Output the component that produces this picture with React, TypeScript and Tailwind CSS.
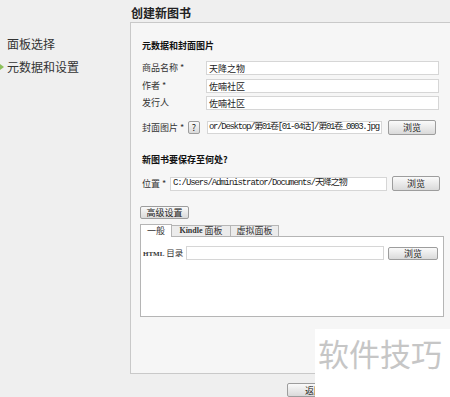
import React from 'react'

const cjk = "font-['Noto_Sans_CJK_SC',sans-serif]"
const mono = "font-['Liberation_Mono','Noto_Sans_CJK_SC',monospace]"

function Btn({ children, className = '' }: { children: React.ReactNode; className?: string }) {
  return (
    <div
      className={`flex items-center justify-center rounded-[2px] border border-[#9d9d9d] bg-linear-to-b from-[#fafafa] to-[#dadada] text-[9px] leading-none text-[#222] ${className}`}
    >
      {children}
    </div>
  )
}

function Field({ value = '', className = '', mono: isMono = false }: { value?: string; className?: string; mono?: boolean }) {
  return (
    <div
      className={`flex items-center overflow-hidden whitespace-nowrap border border-[#d6d6d6] bg-white px-[2px] text-[9px] leading-none text-[#222] ${isMono ? mono : ''} ${className}`}
    >
      {value}
    </div>
  )
}

export default function App() {
  return (
    <div className={`relative flex h-[397px] w-[450px] overflow-hidden bg-[#efefef] text-[#333] ${cjk}`}>
      {/* left nav */}
      <div className="w-[130px] shrink-0 pt-[36px] text-[12px]">
        <div className="pl-[7px] leading-[16px]">面板选择</div>
        <div className="mt-[7px] flex items-center leading-[16px]">
          <span className="h-0 w-0 border-y-[3px] border-l-[4px] border-y-transparent border-l-[#8cbf5a]" />
          <span className="pl-[3px]">元数据和设置</span>
        </div>
      </div>

      {/* main */}
      <div className="flex shrink-0 flex-col">
        <div className="pl-[1px] pt-[4px] text-[12px] font-bold leading-[18px] text-[#222]">创建新图书</div>

        <div className="flex h-[354px] w-[322px] flex-col border border-[#c9c9c9] bg-[#f6f6f6] pl-[9px] text-[9px]">
          <div className="mt-[16px] pl-[2px] font-bold leading-[14px] text-[#111]">元数据和封面图片</div>

          <div className="mt-[8px] flex h-[14px] items-center pl-[2px]">
            <span className="w-[64px]">商品名称 *</span>
            <Field value="天降之物" className="h-[14px] w-[233px]" />
          </div>
          <div className="mt-[4px] flex h-[14px] items-center pl-[2px]">
            <span className="w-[64px]">作者 *</span>
            <Field value="佐喃社区" className="h-[14px] w-[233px]" />
          </div>
          <div className="mt-[3px] flex h-[14px] items-center pl-[2px]">
            <span className="w-[64px]">发行人</span>
            <Field value="佐喃社区" className="h-[14px] w-[233px] border-[#a9c9d9] bg-[#fdfeff]" />
          </div>

          <div className="mt-[10px] flex h-[15px] items-center pl-[2px]">
            <span className="w-[46px]">封面图片 *</span>
            <Btn className="h-[13px] w-[12px] text-[8px]">?</Btn>
            <Field
              mono
              value="or/Desktop/第01卷[01-04话]/第01卷_0003.jpg"
              className="ml-[7px] h-[13px] w-[175px] !px-[1px] text-[8px] tracking-[-1.3px]"
            />
            <Btn className="ml-[6px] h-[15px] w-[48px]">浏览</Btn>
          </div>

          <div className="mt-[18px] pl-[2px] font-bold leading-[14px] text-[#111]">新图书要保存至何处?</div>

          <div className="mt-[9px] flex h-[15px] items-center pl-[2px]">
            <span className="w-[28px]">位置 *</span>
            <Field
              mono
              value="C:/Users/Administrator/Documents/天降之物"
              className="h-[14px] w-[217px] text-[8.5px] tracking-[-1.1px]"
            />
            <Btn className="ml-[5px] h-[15px] w-[48px]">浏览</Btn>
          </div>

          <Btn className="mt-[15px] h-[13px] w-[49px]">高级设置</Btn>

          <div className="mt-[5px] -mb-[1px] flex h-[13px] items-stretch text-[9px]">
            <div className="relative z-10 flex w-[32px] items-center justify-center border border-b-0 border-[#b5b5b5] bg-white">一般</div>
            <div className="mt-[1px] flex w-[59px] items-center justify-center border-y border-r border-[#b5b5b5] bg-[#ececec]">
              <span className="font-['Liberation_Serif',serif] text-[8px] font-bold">Kindle</span>&nbsp;面板
            </div>
            <div className="mt-[1px] flex w-[48px] items-center justify-center border-y border-r border-[#b5b5b5] bg-[#ececec]">虚拟面板</div>
          </div>
          <div className="h-[81px] w-[304px] border border-[#b5b5b5] bg-white pl-[2px] pt-[9px]">
            <div className="flex h-[14px] items-center">
              <span className="w-[43px] text-[8.5px]">
                <span className="font-['Liberation_Serif',serif] text-[7px] font-bold">HTML</span> 目录
              </span>
              <Field className="h-[14px] w-[198px]" />
              <Btn className="ml-[4px] h-[13px] w-[50px]">浏览</Btn>
            </div>
          </div>
        </div>

        <Btn className="ml-[157px] mt-[9px] h-[14px] w-[54px]">返回</Btn>
      </div>

      {/* watermark overlay */}
      <div className="absolute left-[315px] top-[329px] h-[68px] w-[135px] bg-white pl-[3px] pt-[9px] text-[31px] leading-[30px] text-[#c6c6c6]">
        软件技巧
      </div>
    </div>
  )
}
